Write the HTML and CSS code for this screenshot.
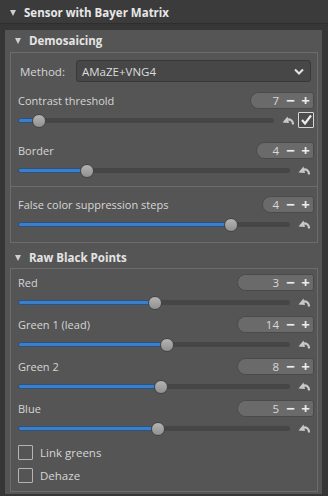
FILE: index.html
```html
<!DOCTYPE html>
<html lang="en">
<head>
    <meta charset="UTF-8">
    <meta name="viewport" content="width=device-width, initial-scale=1.0">
    <title>Sensor with Bayer Matrix</title>
    <link rel="stylesheet" href="styles.css">
</head>
<body>

<div class="tool-header"><span class="arrow"></span>Sensor with Bayer Matrix</div>

<div class="panel">
    <div class="section-title"><span class="arrow"></span>Demosaicing</div>
    <div class="frame frame-demosaic">
        <div class="method-row">
            <span class="method-label">Method:</span>
            <div class="combo">
                <span>AMaZE+VNG4</span>
                <svg class="chevron" width="10" height="7" viewBox="0 0 10 7"><path d="M1 1.5 L5 5.5 L9 1.5" fill="none" stroke="#e4e4e4" stroke-width="2"/></svg>
            </div>
        </div>

        <div class="param">
            <div class="param-head">
                <span>Contrast threshold</span>
                <div class="spin spin-64"><span class="spin-value">7</span><span class="spin-btn">&minus;</span><span class="spin-btn">+</span></div>
            </div>
            <div class="slider-row">
                <div class="track"><div class="fill" style="width: 8.6%"></div></div>
                <svg class="reset" width="12" height="9" viewBox="0 0 12 9"><path d="M11 8.5 C11 5 9 3 5 3.5" fill="none" stroke="#c8c8c8" stroke-width="2.2"/><path d="M5.5 0.5 L0.5 6.5 L7 7 Z" fill="#c8c8c8"/></svg>
                <span class="check checked"><svg width="14" height="14" viewBox="0 0 14 14"><path d="M3 7 L6 10.5 L12 2.5" fill="none" stroke="#ececec" stroke-width="2.2"/></svg></span>
            </div>
        </div>

        <div class="param">
            <div class="param-head">
                <span>Border</span>
                <div class="spin spin-58"><span class="spin-value">4</span><span class="spin-btn">&minus;</span><span class="spin-btn">+</span></div>
            </div>
            <div class="slider-row">
                <div class="track"><div class="fill" style="width: 25.7%"></div></div>
                <svg class="reset" width="12" height="9" viewBox="0 0 12 9"><path d="M11 8.5 C11 5 9 3 5 3.5" fill="none" stroke="#c8c8c8" stroke-width="2.2"/><path d="M5.5 0.5 L0.5 6.5 L7 7 Z" fill="#c8c8c8"/></svg>
            </div>
        </div>

        <div class="separator"></div>

        <div class="param">
            <div class="param-head">
                <span>False color suppression steps</span>
                <div class="spin spin-52"><span class="spin-value">4</span><span class="spin-btn">&minus;</span><span class="spin-btn">+</span></div>
            </div>
            <div class="slider-row">
                <div class="track"><div class="fill" style="width: 78.7%"></div></div>
                <svg class="reset" width="12" height="9" viewBox="0 0 12 9"><path d="M11 8.5 C11 5 9 3 5 3.5" fill="none" stroke="#c8c8c8" stroke-width="2.2"/><path d="M5.5 0.5 L0.5 6.5 L7 7 Z" fill="#c8c8c8"/></svg>
            </div>
        </div>
    </div>

    <div class="section-title section-raw"><span class="arrow"></span>Raw Black Points</div>
    <div class="frame frame-raw">
        <div class="param">
            <div class="param-head">
                <span>Red</span>
                <div class="spin spin-77"><span class="spin-value">3</span><span class="spin-btn">&minus;</span><span class="spin-btn">+</span></div>
            </div>
            <div class="slider-row">
                <div class="track"><div class="fill" style="width: 50.7%"></div></div>
                <svg class="reset" width="12" height="9" viewBox="0 0 12 9"><path d="M11 8.5 C11 5 9 3 5 3.5" fill="none" stroke="#c8c8c8" stroke-width="2.2"/><path d="M5.5 0.5 L0.5 6.5 L7 7 Z" fill="#c8c8c8"/></svg>
            </div>
        </div>

        <div class="param">
            <div class="param-head">
                <span>Green 1 (lead)</span>
                <div class="spin spin-77"><span class="spin-value">14</span><span class="spin-btn">&minus;</span><span class="spin-btn">+</span></div>
            </div>
            <div class="slider-row">
                <div class="track"><div class="fill" style="width: 55.1%"></div></div>
                <svg class="reset" width="12" height="9" viewBox="0 0 12 9"><path d="M11 8.5 C11 5 9 3 5 3.5" fill="none" stroke="#c8c8c8" stroke-width="2.2"/><path d="M5.5 0.5 L0.5 6.5 L7 7 Z" fill="#c8c8c8"/></svg>
            </div>
        </div>

        <div class="param">
            <div class="param-head">
                <span>Green 2</span>
                <div class="spin spin-77"><span class="spin-value">8</span><span class="spin-btn">&minus;</span><span class="spin-btn">+</span></div>
            </div>
            <div class="slider-row">
                <div class="track"><div class="fill" style="width: 52.9%"></div></div>
                <svg class="reset" width="12" height="9" viewBox="0 0 12 9"><path d="M11 8.5 C11 5 9 3 5 3.5" fill="none" stroke="#c8c8c8" stroke-width="2.2"/><path d="M5.5 0.5 L0.5 6.5 L7 7 Z" fill="#c8c8c8"/></svg>
            </div>
        </div>

        <div class="param">
            <div class="param-head">
                <span>Blue</span>
                <div class="spin spin-77"><span class="spin-value">5</span><span class="spin-btn">&minus;</span><span class="spin-btn">+</span></div>
            </div>
            <div class="slider-row">
                <div class="track"><div class="fill" style="width: 51.8%"></div></div>
                <svg class="reset" width="12" height="9" viewBox="0 0 12 9"><path d="M11 8.5 C11 5 9 3 5 3.5" fill="none" stroke="#c8c8c8" stroke-width="2.2"/><path d="M5.5 0.5 L0.5 6.5 L7 7 Z" fill="#c8c8c8"/></svg>
            </div>
        </div>

        <div class="check-list">
            <label class="check-row"><span class="check"></span>Link greens</label>
            <label class="check-row"><span class="check"></span>Dehaze</label>
        </div>
    </div>
</div>

</body>
</html>
```

FILE: styles.css
```css
body {
    font-family: "Open Sans", "Noto Sans", sans-serif;
    font-size: 11px;
    color: #d6d6d6;
    background-color: #363636;
    margin: 0;
    padding: 0;
    width: 328px;
    height: 496px;
    overflow: hidden;
}

.arrow {
    display: inline-block;
    width: 0;
    height: 0;
    border-left: 3.5px solid transparent;
    border-right: 3.5px solid transparent;
    border-top: 6px solid #cfcfcf;
    margin-right: 8px;
    vertical-align: 1px;
}

.tool-header {
    height: 23px;
    line-height: 25px;
    padding-left: 10px;
    background-color: #3b3b3b;
    border-bottom: 1px solid #2e2e2e;
    font-weight: bold;
    font-size: 11.5px;
    color: #e8e8e8;
}

.panel {
    margin: 0 6px 0 5px;
    padding-bottom: 2px;
    background-color: #555555;
}

.section-title {
    height: 22px;
    line-height: 22px;
    margin-top: 6px;
    padding-left: 10px;
    font-weight: bold;
    font-size: 11.5px;
    color: #e4e4e4;
}

.section-raw {
    height: 21px;
    line-height: 21px;
    margin-top: 4px;
}

.frame {
    margin: 0 4px 0 5px;
    padding: 7px 3px 7px 7px;
    border: 1px solid #6c6c6c;
}

.frame-raw {
    padding-top: 4px;
    padding-bottom: 8px;
}

.method-row {
    display: flex;
    align-items: center;
    height: 22px;
    margin-bottom: 9px;
}

.method-label {
    width: 56px;
    padding-left: 2px;
    font-size: 11.5px;
}

.combo {
    flex: 1;
    display: flex;
    align-items: center;
    justify-content: space-between;
    height: 20px;
    margin-right: 3px;
    padding: 0 6px 0 5px;
    background-color: #474747;
    border: 1px solid #383838;
    border-radius: 3px;
    font-size: 11.5px;
    color: #dcdcdc;
}

.param + .param {
    margin-top: 10px;
}

.frame-raw .param + .param {
    margin-top: 2px;
}

.param-head {
    display: flex;
    align-items: center;
    justify-content: space-between;
    height: 18px;
}

.spin {
    display: flex;
    align-items: center;
    justify-content: flex-end;
    height: 15px;
    background-color: #6a6a6a;
    border: 1px solid #4a4a4a;
    border-radius: 9px 3px 3px 9px;
    color: #d8d8d8;
}

.spin-52 { width: 50px; }
.spin-58 { width: 56px; }
.spin-64 { width: 62px; }
.spin-77 { width: 75px; }

.spin-value {
    padding-right: 4px;
    font-size: 11.5px;
}

.spin-btn {
    width: 15px;
    text-align: center;
    font-weight: bold;
    font-size: 15px;
    line-height: 15px;
    color: #ececec;
}

.slider-row {
    display: flex;
    align-items: center;
    height: 22px;
}

.track {
    flex: 1;
    height: 5px;
    background-color: #464646;
    border-radius: 3px;
    position: relative;
}

.fill {
    height: 5px;
    box-sizing: border-box;
    background-color: #3d7ec9;
    border: 1px solid #2a5283;
    border-radius: 3px;
    position: relative;
}

.fill::after {
    content: "";
    position: absolute;
    right: -7px;
    top: -5px;
    width: 12px;
    height: 12px;
    border-radius: 50%;
    background: linear-gradient(#b4b4b4, #909090);
    border: 1px solid #444444;
}

.reset {
    margin: 0 4px 0 8px;
    flex-shrink: 0;
}

.check {
    display: inline-flex;
    align-items: center;
    justify-content: center;
    box-sizing: border-box;
    width: 15px;
    height: 15px;
    border: 1px solid #b4b4b4;
    border-radius: 1px;
}

.check.checked {
    width: 16px;
    height: 16px;
    border: 1.5px solid #d6d6d6;
    background-color: #4c4c4c;
}

.separator {
    height: 1px;
    margin: 5px -3px 8px -7px;
    background-color: #6c6c6c;
}

.check-list {
    display: flex;
    flex-direction: column;
    gap: 8px;
    margin-top: 6px;
}

.check-row {
    display: flex;
    align-items: center;
    gap: 7px;
    height: 15px;
    font-size: 11.5px;
}
```
